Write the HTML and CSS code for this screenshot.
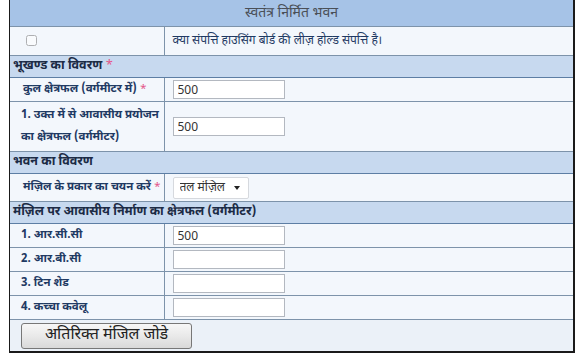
FILE: index.html
```html
<!doctype html>
<html lang="hi">
 <head>
  <meta charset="UTF-8">
  <title>स्वतंत्र निर्मित भवन</title>
  <link rel="stylesheet" href="styles.css">
 </head>
 <body>
  <div id="all">
   <table class="frm">
    <colgroup>
     <col class="c1">
     <col class="c2">
    </colgroup>
    <tr class="head">
     <td colspan="2">स्वतंत्र निर्मित भवन</td>
    </tr>
    <tr class="row r_chk">
     <td class="lbl"><input type="checkbox" class="chk"></td>
     <td class="val txt">क्या संपत्ति हाउसिंग बोर्ड की लीज़ होल्ड संपत्ति है।</td>
    </tr>
    <tr class="sec">
     <td colspan="2">भूखण्ड का विवरण <span class="req">*</span></td>
    </tr>
    <tr class="row r_in">
     <td class="lbl ind">कुल क्षेत्रफल (वर्गमीटर में) <span class="req">*</span></td>
     <td class="val"><input type="text" class="inp" value="500"></td>
    </tr>
    <tr class="row r_two">
     <td class="lbl ind2">1. उक्त में से आवासीय प्रयोजन<br>का क्षेत्रफल (वर्गमीटर)</td>
     <td class="val"><input type="text" class="inp" value="500"></td>
    </tr>
    <tr class="sec">
     <td colspan="2">भवन का विवरण</td>
    </tr>
    <tr class="row r_sel">
     <td class="lbl ind">मंज़िल के प्रकार का चयन करें <span class="req">*</span></td>
     <td class="val">
      <span class="selbox">
       <select class="sel">
        <option>तल मंज़िल</option>
       </select>
      </span>
     </td>
    </tr>
    <tr class="sec">
     <td colspan="2">मंज़िल पर आवासीय निर्माण का क्षेत्रफल (वर्गमीटर)</td>
    </tr>
    <tr class="row r_in">
     <td class="lbl ind2">1. आर.सी.सी</td>
     <td class="val"><input type="text" class="inp" value="500"></td>
    </tr>
    <tr class="row r_in">
     <td class="lbl ind2">2. आर.बी.सी</td>
     <td class="val"><input type="text" class="inp" value=""></td>
    </tr>
    <tr class="row r_in">
     <td class="lbl ind2">3. टिन शेड</td>
     <td class="val"><input type="text" class="inp" value=""></td>
    </tr>
    <tr class="row r_in">
     <td class="lbl ind2">4. कच्चा कवेलू</td>
     <td class="val"><input type="text" class="inp" value=""></td>
    </tr>
    <tr class="foot">
     <td colspan="2"><button type="button" class="but">अतिरिक्त मंजिल जोडे</button></td>
    </tr>
   </table>
  </div>
 </body>
</html>
```
FILE: styles.css
```css
/* 기본 */
body {
margin: 0;
background: #ffffff;
font-family: "Noto Sans Devanagari", "Noto Sans", sans-serif;
}

#all {
width: 563px;
margin-left: 9px;
border-left: solid 1px #1a1a1a;
border-right: solid 2px #1a1a1a;
border-bottom: solid 2px #1a1a1a;
}

.frm {
width: 100%;
border-collapse: collapse;
table-layout: fixed;
}

.c1 {
width: 154px;
}

.frm td {
padding: 0;
border-bottom: solid 1px #7d93aa;
font-size: 12px;
line-height: 15px;
color: #1f3a63;
}

/* 제목 */
.head td {
height: 26px;
background: #a6c3e7;
text-align: center;
font-size: 14px;
color: #4a4f57;
}

/* 구역 제목 */
.sec td {
height: 21px;
background: #c7d9ef;
padding-left: 3px;
font-weight: bold;
font-size: 12.5px;
color: #1c2b45;
border-bottom-color: #5d7ea4;
}

.row td {
background: #f3f7fc;
}

.lbl {
border-right: solid 1px #7d93aa;
font-weight: bold;
font-size: 11.5px !important;
white-space: nowrap;
overflow: hidden;
}

.ind {
padding-left: 13px !important;
}

.ind2 {
padding-left: 11px !important;
}

.val {
padding-left: 8px !important;
}

.txt {
font-size: 12px;
}

.r_chk td {
height: 28px;
}

.r_in td {
height: 23px;
}

.r_two td {
height: 49px;
line-height: 22px;
}

.r_sel td {
height: 27px;
}

.req {
color: #e3578a;
font-weight: normal;
}

.chk {
width: 11px;
height: 11px;
margin: 0 0 0 16px;
vertical-align: middle;
opacity: 0.55;
}

.inp {
box-sizing: border-box;
width: 112px;
height: 19px;
border: solid 1px #b3b8c0;
padding: 0 4px;
font-family: "Noto Sans", sans-serif;
font-size: 12px;
color: #333333;
background: #ffffff;
vertical-align: middle;
}

/* 선택 상자 */
.selbox {
position: relative;
display: inline-block;
vertical-align: middle;
}

.sel {
appearance: none;
-webkit-appearance: none;
box-sizing: border-box;
width: 76px;
height: 22px;
border: solid 1px #d6d9de;
border-radius: 2px;
background: #ffffff;
padding: 0 0 0 6px;
font-family: "Noto Sans Devanagari", "Noto Sans", sans-serif;
font-size: 12px;
color: #333333;
}

.selbox::after {
content: "";
position: absolute;
right: 9px;
top: 9px;
border-left: 3px solid transparent;
border-right: 3px solid transparent;
border-top: 4px solid #222222;
}

/* 버튼 줄 */
.foot td {
height: 31px;
background: #ebf1f8;
padding-left: 11px;
border-bottom: none;
}

.but {
box-sizing: border-box;
width: 171px;
height: 26px;
border: solid 1px #777777;
border-radius: 3px;
background: linear-gradient(#f7f7f7 0%, #e9e9e9 50%, #d9d9d9 100%);
font-family: "Noto Sans Devanagari", "Noto Sans", sans-serif;
font-size: 16px;
color: #222222;
padding: 0;
vertical-align: middle;
}
```
